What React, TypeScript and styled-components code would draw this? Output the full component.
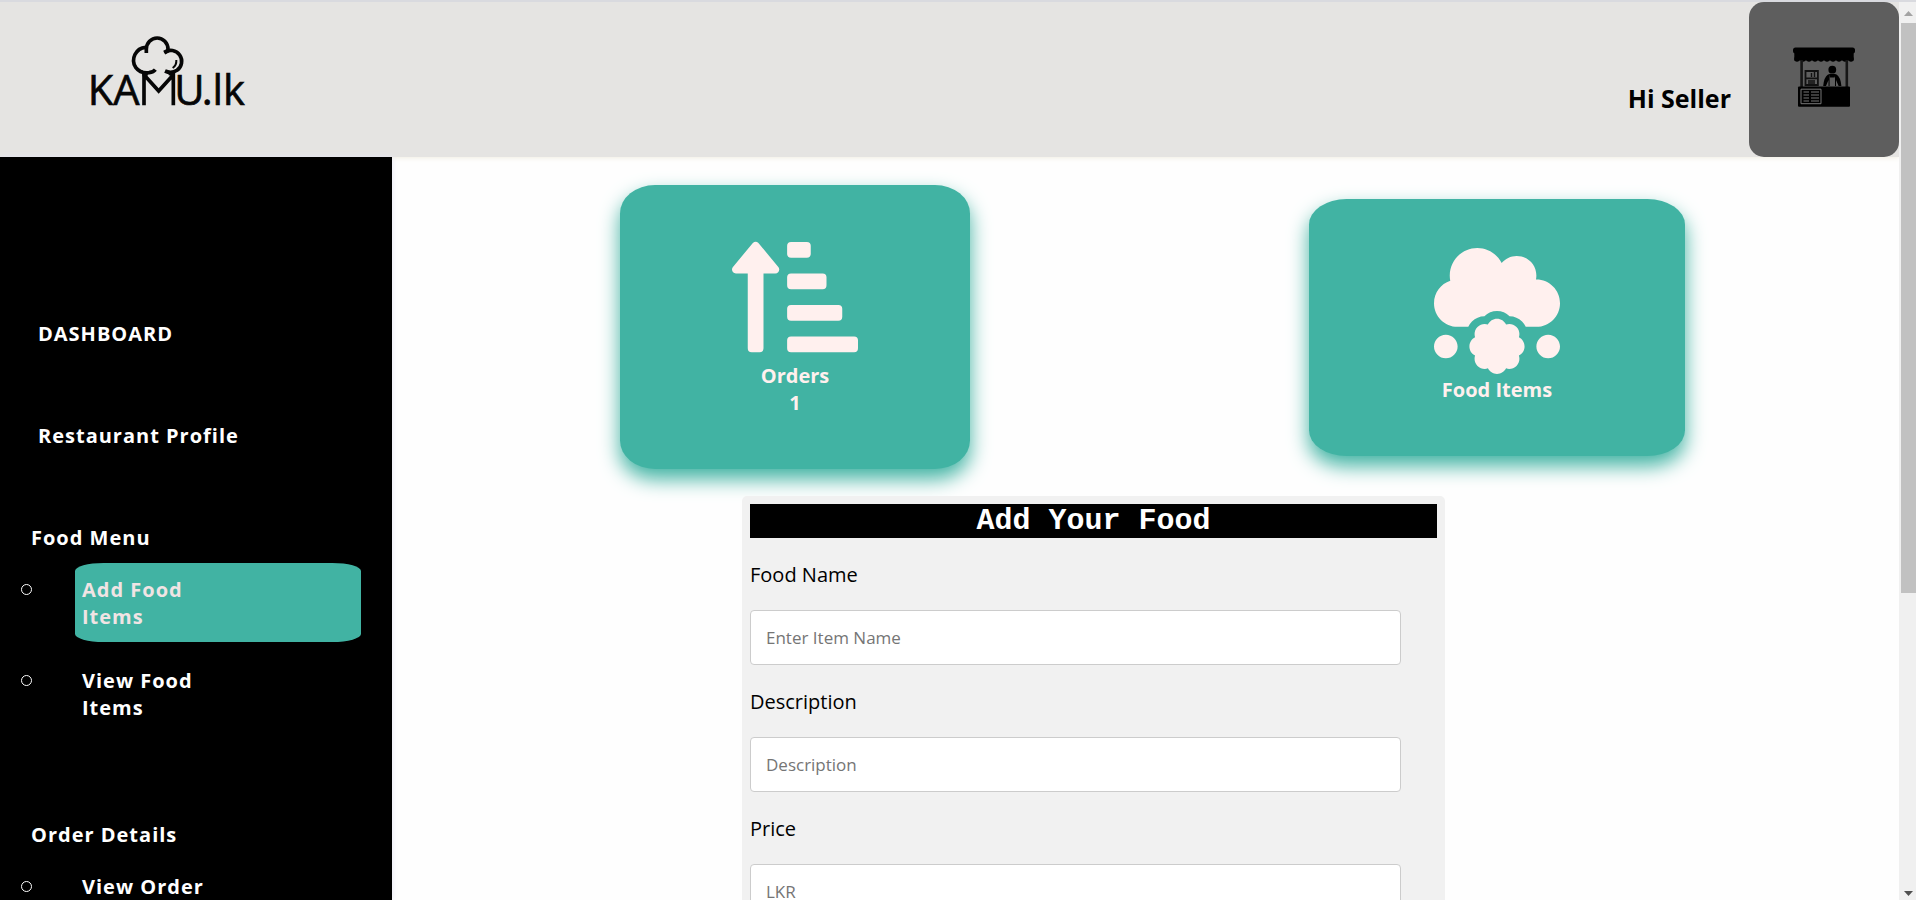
import React from "react";
import styled, { createGlobalStyle } from "styled-components";
import { FaCloudMeatball, FaSortAmountUpAlt } from "react-icons/fa";

const teal = "#41b3a3";

const GlobalStyle = createGlobalStyle`
  * { box-sizing: border-box; }
  body {
    margin: 0;
    font-family: "Open Sans", sans-serif;
    font-size: 20px;
    line-height: 27px;
    color: #000;
    background: #fefefe;
  }
`;

const Shell = styled.div`
  display: flex;
  height: 100vh;
  overflow: hidden;
  border-top: 2px solid #d9dadf;
`;

const Page = styled.div`
  flex: 1;
  min-width: 0;
  display: flex;
  flex-direction: column;
`;

const Header = styled.header`
  flex: none;
  display: flex;
  align-items: stretch;
  height: 155px;
  background: #e5e4e2;
  box-shadow: 0 0 6px #ece8d8;
`;

const LogoLink = styled.a`
  display: block;
  margin: 32px auto 0 87px;
  svg { display: block; }
`;

const Greeting = styled.h1`
  margin: 80px 18px 0 0;
  font-size: 25px;
  line-height: 33px;
  font-weight: 700;
`;

const Avatar = styled.button`
  width: 150px;
  padding: 0;
  border: 0;
  border-radius: 15px;
  background: #5e5e5e;
  svg { display: block; }
`;

const Body = styled.div`
  flex: 1;
  display: flex;
  min-height: 0;
`;

const Sidebar = styled.nav`
  flex: none;
  width: 392px;
  padding: 163px 31px 0 21px;
  background: #000;
  color: #fff;
  font-weight: 700;
  letter-spacing: 1px;
  overflow: hidden;
  box-shadow: 0 0 6px #e6e6f4;
`;

const TopLink = styled.a`
  display: block;
  margin: 0 0 75px 17px;
  color: inherit;
  text-decoration: none;
`;

const SectionTitle = styled.h2`
  margin: 0 0 12px 10px;
  font-size: 20px;
  line-height: 27px;
`;

const SubList = styled.ul`
  margin: 0 0 88px;
  padding: 0;
  list-style: none;
`;

const SubItem = styled.li`
  display: flex;
  justify-content: space-between;
  margin-bottom: 12px;
  &::before {
    content: "";
    width: 9px;
    height: 9px;
    margin-top: 21px;
    border: 1px solid #fff;
    border-radius: 50%;
  }
`;

const SubLink = styled.a<{ $active?: boolean }>`
  width: 286px;
  padding: 13px 130px 12px 7px;
  border-radius: 10%;
  background: ${(p) => (p.$active ? teal : "transparent")};
  color: ${(p) => (p.$active ? "#f0e4e4" : "#fff")};
  text-decoration: none;
`;

const Main = styled.main`
  flex: 1;
  min-width: 0;
  overflow: hidden;
`;

const Cards = styled.section`
  display: grid;
  grid-template-columns: 228fr 350px 339fr 376px 214fr;
  align-items: center;
  padding: 28px 0 27px;
`;

const Card = styled.a<{ $column: number }>`
  grid-column: ${(p) => p.$column};
  display: flex;
  flex-direction: column;
  align-items: center;
  padding: 49px 0 53px;
  border-radius: 10%;
  background: ${teal};
  box-shadow: 0 10px 20px ${teal};
  color: #fff0ee;
  font-weight: 700;
  text-decoration: none;
  svg { margin-bottom: 2px; }
`;

const FormRow = styled.div`
  display: grid;
  grid-template-columns: 350fr 703fr 454fr;
`;

const Form = styled.form`
  position: relative;
  grid-column: 2;
  padding: 8px;
  border-radius: 5px;
  background: #f1f1f1;
`;

const FormTitle = styled.h2`
  margin: 0 0 23px;
  background: #000;
  color: #fff;
  font: 700 30px/34px "Courier New", "Liberation Mono", monospace;
  text-align: center;
`;

const Field = styled.div`
  display: flex;
  flex-direction: column;
  gap: 22px;
  margin: 0 36px 23px 0;
`;

const Input = styled.input`
  width: 100%;
  height: 55px;
  padding: 0 15px;
  border: 1px solid #ccc;
  border-radius: 4px;
  background: #fff;
  font: 17px "Open Sans", sans-serif;
  &::placeholder { color: #757575; }
`;

const ScrollTrack = styled.div`
  flex: none;
  display: flex;
  flex-direction: column;
  align-items: flex-end;
  width: 17px;
  background: #f0f0f0;
`;

const ScrollThumb = styled.div`
  width: 15px;
  height: 63.5%;
  margin-bottom: auto;
  background: #c1c1c1;
`;

const Logo = () => (
  <svg width="165" height="87" viewBox="80 100 495 261" role="img" aria-label="KAMU.lk">
    <g fill="none" stroke="#060606" strokeWidth="11">
      <path d="M258 157 V146 A32.5 34 0 0 1 323 146 L321 152 L312 157" />
      <path d="M256 140 A39 39 0 0 0 226 200 Q240 219 266 216 Q280 214 285 207" />
      <path d="M312 155 A32 32 0 1 1 350 209 Q333 220 314 211" />
      <path d="M348 178 Q349 194 337 202" strokeWidth="6" />
      <path d="M251 314 V222 L295 271 L339 222 V314" />
      <path d="M246 222 L262 219 M326 218 L342 224" />
    </g>
    <g fill="#060606" stroke="#060606" strokeWidth="2" fontFamily="Open Sans" fontSize="125">
      <text x="82" y="314">KA</text>
      <text x="342" y="314">U</text>
      <text x="424" y="314">.lk</text>
    </g>
  </svg>
);

const scallops = Array.from({ length: 10 }, (_, i) => 48 + i * 6);

const FoodStall = () => (
  <svg width="150" height="155" viewBox="0 0 150 155" aria-hidden="true">
    <rect x="44" y="45.5" width="62" height="6" rx="2.5" />
    <rect x="45.3" y="49" width="59.4" height="9.5" />
    {scallops.map((x) => (
      <circle key={x} cx={x} cy="57" r="2.7" />
    ))}
    <path d="M52.6 58V86M97.8 58V86" stroke="#161616" strokeWidth="2.6" />
    <rect x="49" y="84.5" width="52" height="20.3" rx="1" />
    <path
      d="M52 87.2h20v14.5h-20zM54.5 90h5.5M54.5 93h5.5M54.5 96h5.5M54.5 99h5.5M62 90h8M62 93h8M62 96h8M62 99h8"
      fill="none"
      stroke="#777"
      strokeWidth="1"
    />
    <path d="M56.5 69h12.4v14H56.5zM56.5 76.3h12.4" fill="none" stroke="#111" strokeWidth="1.8" />
    <path d="M62.5 71v4M65.5 70v5M59 79h7M59 81h7" stroke="#111" strokeWidth="1.4" />
    <circle cx="83.3" cy="67.7" r="3.9" />
    <path d="M79 72.5Q75 75 74.2 84H77L79.5 78V84H80.6V72.3zM87.6 72.5Q91.6 75 92.4 84H89.6L87 78V84H86V72.3z" />
    <path d="M80 72h6.6l-1 3.5h-4.6z" />
  </svg>
);

const ArrowUp = () => (
  <svg width="15" height="21" viewBox="0 0 15 21" aria-hidden="true">
    <path d="M3 14L7.5 9L12 14z" fill="#a3a3a3" />
  </svg>
);

const ArrowDown = () => (
  <svg width="15" height="17" viewBox="0 0 15 17" aria-hidden="true">
    <path d="M3 8L7.5 13L12 8z" fill="#505050" />
  </svg>
);

const fields = [
  { id: "food-name", label: "Food Name", placeholder: "Enter Item Name" },
  { id: "description", label: "Description", placeholder: "Description" },
  { id: "price", label: "Price", placeholder: "LKR" },
];

export default function App() {
  return (
    <>
      <GlobalStyle />
      <Shell>
        <Page>
          <Header>
            <LogoLink href="#home">
              <Logo />
            </LogoLink>
            <Greeting>Hi Seller</Greeting>
            <Avatar type="button" aria-label="Seller account">
              <FoodStall />
            </Avatar>
          </Header>
          <Body>
            <Sidebar>
              <TopLink href="#dashboard">DASHBOARD</TopLink>
              <TopLink href="#profile">Restaurant Profile</TopLink>
              <SectionTitle>Food Menu</SectionTitle>
              <SubList>
                <SubItem>
                  <SubLink href="#add-food" $active>Add Food Items</SubLink>
                </SubItem>
                <SubItem>
                  <SubLink href="#view-food">View Food Items</SubLink>
                </SubItem>
              </SubList>
              <SectionTitle>Order Details</SectionTitle>
              <SubList>
                <SubItem>
                  <SubLink href="#view-order">View Order</SubLink>
                </SubItem>
              </SubList>
            </Sidebar>
            <Main>
              <Cards>
                <Card href="#orders" $column={2}>
                  <FaSortAmountUpAlt size={126} />
                  <span>Orders</span>
                  <span>1</span>
                </Card>
                <Card href="#food-items" $column={4}>
                  <FaCloudMeatball size={126} />
                  <span>Food Items</span>
                </Card>
              </Cards>
              <FormRow>
                <Form>
                  <FormTitle>Add Your Food</FormTitle>
                  {fields.map((f) => (
                    <Field key={f.id}>
                      <label htmlFor={f.id}>{f.label}</label>
                      <Input id={f.id} type="text" placeholder={f.placeholder} />
                    </Field>
                  ))}
                </Form>
              </FormRow>
            </Main>
          </Body>
        </Page>
        <ScrollTrack>
          <ArrowUp />
          <ScrollThumb />
          <ArrowDown />
        </ScrollTrack>
      </Shell>
    </>
  );
}
